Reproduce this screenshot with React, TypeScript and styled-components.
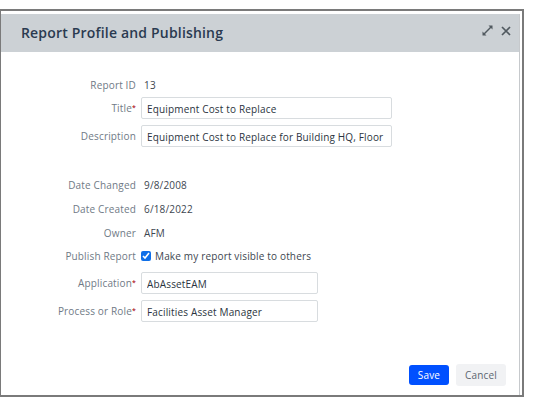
import React from 'react';
import styled, { createGlobalStyle } from 'styled-components';

const GlobalStyle = createGlobalStyle`
  html, body {
    margin: 0;
    padding: 0;
    background: #fff;
  }
  body {
    font-family: 'Open Sans', 'Liberation Sans', sans-serif;
  }
`;

const Frame = styled.div`
  box-sizing: border-box;
  width: 524px;
  height: 388px;
  margin-top: 9px;
  padding: 3px 2px 0 0;
  border: solid #7a7a7a;
  border-width: 2px 2px 2px 1px;
  display: flex;
`;

const Dialog = styled.div`
  flex: 1;
  display: flex;
  flex-direction: column;
  border-right: 1px solid #c6c9cc;
`;

const Header = styled.div`
  height: 38px;
  flex-shrink: 0;
  background: #ccd1d5;
  display: flex;
  align-items: center;
  justify-content: space-between;
  padding: 0 8px 0 20px;
`;

const Title = styled.h1`
  margin: 0 0 1px;
  font-size: 14px;
  font-weight: 600;
  letter-spacing: 0.18px;
  color: #2a3a50;
`;

const HeaderIcons = styled.div`
  display: flex;
  align-items: center;
  gap: 8px;
  margin-bottom: 5px;
  color: #50595f;
`;

const Form = styled.div`
  flex: 1;
  padding-top: 22px;
  display: flex;
  flex-direction: column;
`;

const Row = styled.div<{ $height: number; $after?: number }>`
  height: ${(p) => p.$height}px;
  margin-bottom: ${(p) => p.$after ?? 0}px;
  display: flex;
  align-items: center;
`;

const Label = styled.div`
  width: 135px;
  flex-shrink: 0;
  text-align: right;
  font-size: 10px;
  color: #6f7a86;
  letter-spacing: 0.16px;
`;

const Required = styled.span`
  color: #b3262e;
  font-size: 7px;
  font-weight: 600;
  vertical-align: 2px;
`;

const Value = styled.div`
  margin-left: 8px;
  font-size: 10px;
  color: #3d4650;
  letter-spacing: 0.16px;
`;

const Field = styled.input<{ $width: number }>`
  box-sizing: border-box;
  width: ${(p) => p.$width}px;
  height: 22px;
  margin-left: 5px;
  padding: 1px 5px 0;
  border: 1px solid #d8dcdf;
  border-radius: 2px;
  outline: none;
  background: #fff;
  font-family: inherit;
  font-size: 10px;
  letter-spacing: 0.16px;
  color: #2b3440;
`;

const CheckLabel = styled.label`
  margin-left: 5px;
  display: flex;
  align-items: center;
  gap: 4px;
  font-size: 10px;
  letter-spacing: 0.16px;
  color: #3d4650;
`;

const Check = styled.input`
  width: 10px;
  height: 10px;
  margin: 0;
  accent-color: #0f6fe8;
`;

const Footer = styled.div`
  height: 22px;
  margin-bottom: 9px;
  padding-right: 13px;
  display: flex;
  justify-content: flex-end;
  align-items: center;
  gap: 7px;
`;

const Button = styled.button<{ $primary?: boolean }>`
  box-sizing: border-box;
  width: ${(p) => (p.$primary ? 40 : 50)}px;
  height: ${(p) => (p.$primary ? 20 : 22)}px;
  padding: 0;
  border: none;
  border-radius: 3px;
  background: ${(p) => (p.$primary ? '#0050ff' : '#f1f2f4')};
  color: ${(p) => (p.$primary ? '#fff' : '#5c6670')};
  font-family: inherit;
  font-size: 10px;
  letter-spacing: 0.16px;
`;

const App: React.FC = () => {
  return (
    <>
      <GlobalStyle />
      <Frame>
        <Dialog>
          <Header>
            <Title>Report Profile and Publishing</Title>
            <HeaderIcons>
              <svg width="11" height="11" viewBox="0 0 11 11" fill="currentColor">
                <path d="M6.5 0.5 H10.5 V4.5 L9 3 L3 9 L4.5 10.5 H0.5 V6.5 L2 8 L8 2 Z" />
              </svg>
              <svg width="10" height="10" viewBox="0 0 10 10" stroke="currentColor" strokeWidth="1.7" fill="none">
                <path d="M1 1 L9 9 M9 1 L1 9" />
              </svg>
            </HeaderIcons>
          </Header>
          <Form>
            <Row $height={22} $after={1}>
              <Label>Report ID</Label>
              <Value>13</Value>
            </Row>
            <Row $height={22} $after={6}>
              <Label>Title<Required>*</Required></Label>
              <Field $width={251} defaultValue="Equipment Cost to Replace" />
            </Row>
            <Row $height={22} $after={26}>
              <Label>Description</Label>
              <Field $width={251} defaultValue="Equipment Cost to Replace for Building HQ, Floor" />
            </Row>
            <Row $height={24}>
              <Label>Date Changed</Label>
              <Value>9/8/2008</Value>
            </Row>
            <Row $height={24}>
              <Label>Date Created</Label>
              <Value>6/18/2022</Value>
            </Row>
            <Row $height={23}>
              <Label>Owner</Label>
              <Value>AFM</Value>
            </Row>
            <Row $height={24} $after={4}>
              <Label>Publish Report</Label>
              <CheckLabel>
                <Check type="checkbox" defaultChecked />
                Make my report visible to others
              </CheckLabel>
            </Row>
            <Row $height={22} $after={6}>
              <Label>Application<Required>*</Required></Label>
              <Field $width={177} defaultValue="AbAssetEAM" />
            </Row>
            <Row $height={22}>
              <Label>Process or Role<Required>*</Required></Label>
              <Field $width={177} defaultValue="Facilities Asset Manager" />
            </Row>
          </Form>
          <Footer>
            <Button $primary>Save</Button>
            <Button>Cancel</Button>
          </Footer>
        </Dialog>
      </Frame>
    </>
  );
};

export default App;
